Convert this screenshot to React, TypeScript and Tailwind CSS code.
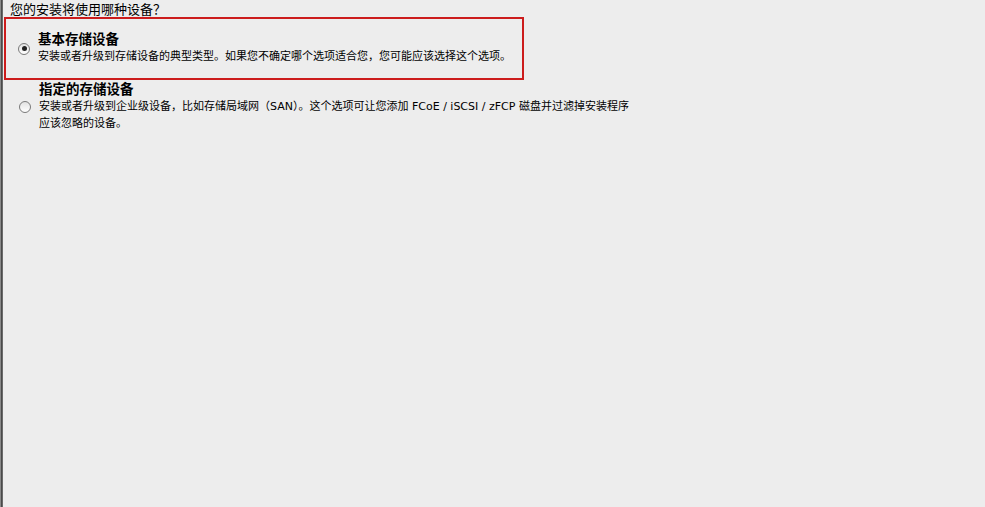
import * as React from "react"

const font = { fontFamily: '"DejaVu Sans", "Noto Sans CJK SC", sans-serif' }
const cjk = { fontFamily: '"Noto Sans CJK SC", sans-serif' }

function Radio({ checked }: { checked?: boolean }) {
    return (
        <div className="w-[12px] h-[12px] shrink-0 rounded-full border border-[#7a7a7a] bg-gradient-to-b from-[#e2e2e2] to-white flex items-center justify-center">
            {checked && <div className="w-[5px] h-[5px] rounded-full bg-[#222]" />}
        </div>
    )
}

export default function App() {
    return (
        <div className="w-[985px] h-[507px] bg-[#ededed] flex text-black overflow-hidden" style={font}>
            {/* left window edge */}
            <div className="w-[1px] bg-[#8a8a8a]" />
            <div className="w-[1px] bg-[#4a4a4a]" />
            <div className="w-[1px] bg-[#6a6a6a]" />

            <div className="flex-1 flex flex-col">
                <div className="pl-[7px] pt-[2px] text-[13px] leading-[14px]">
                    您的安装将使用哪种设备<span style={cjk}>？</span>
                </div>

                {/* focused option */}
                <div className="ml-[1px] w-[520px] h-[63px] border-2 border-[#cc1c1c] flex items-center pl-[12px]">
                    <Radio checked />
                    <div className="ml-[8px] pb-[2px]">
                        <div className="text-[13.5px] leading-[16px] font-bold">基本存储设备</div>
                        <div className="text-[11px] leading-[17px]">
                            安装或者升级到存储设备的典型类型。如果您不确定哪个选项适合您<span style={cjk}>，</span>您可能应该选择这个选项。
                        </div>
                    </div>
                </div>

                <div className="flex items-center pl-[16px] pt-[1px]">
                    <Radio />
                    <div className="ml-[8px]">
                        <div className="text-[13.5px] leading-[16px] font-bold">指定的存储设备</div>
                        <div className="text-[11px] leading-[17px]">
                            安装或者升级到企业级设备<span style={cjk}>，</span>比如存储局域网<span style={cjk}>（</span>SAN<span style={cjk}>）</span>。这个选项可让您添加 FCoE / iSCSI / zFCP 磁盘并过滤掉安装程序
                            <br />
                            应该忽略的设备。
                        </div>
                    </div>
                </div>
            </div>
        </div>
    )
}
